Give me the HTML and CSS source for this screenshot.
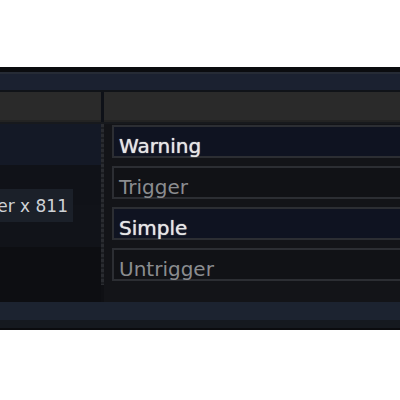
FILE: index.html
```html
<!DOCTYPE html>
<html lang="en">
<head>
  <meta charset="UTF-8">
  <title>Trigger Panel</title>
  <link rel="stylesheet" href="styles.css">
</head>
<body>

<div class="panel">
  <div class="topbar"></div>

  <div class="header">
    <div class="head-cell"></div>
    <div class="head-split"></div>
    <div class="head-cell"></div>
  </div>

  <div class="content">
    <div class="left-col">
      <div class="counter">Counter x 811</div>
    </div>
    <div class="split"></div>
    <div class="right-col">
      <div class="opt active">Warning</div>
      <div class="opt">Trigger</div>
      <div class="opt active">Simple</div>
      <div class="opt">Untrigger</div>
    </div>
  </div>

  <div class="footer"></div>
</div>

</body>
</html>
```

FILE: styles.css
```css
body {
  margin: 0;
  background: #ffffff;
  font-family: "DejaVu Sans", sans-serif;
}
.panel {
  margin-top: 67px;
  width: 400px;
  overflow: hidden;
}
.topbar {
  height: 18px;
  background: #1b2130;
  border-top: 5px solid #0b0c0f;
  border-bottom: 2px solid #101318;
  box-shadow: inset 0 2px 0 #262b35;
}
.header {
  display: grid;
  grid-template-columns: 101px 3px 1fr;
  height: 30px;
  border-bottom: 2px solid #17191d;
}
.head-cell {
  background: #2a2a2a;
  box-shadow: inset 0 -2px 0 #232323;
}
.head-split {
  background: #0e1118;
}
.content {
  display: grid;
  grid-template-columns: 101px 3px 1fr;
  height: 178px;
  background: #0e0f13;
}
.left-col {
  overflow: hidden;
  background: linear-gradient(#141926 0 41px, #101218 41px 81px, #111319 81px 123px, #0d0e12 123px);
}
.counter {
  width: 73px;
  height: 33px;
  margin-top: 65px;
  box-sizing: border-box;
  padding: 2px 5px 0 0;
  line-height: 31px;
  display: flex;
  justify-content: flex-end;
  overflow: hidden;
  white-space: nowrap;
  background: #1b2029;
  color: #cfd2d6;
  font-size: 17px;
}
.split {
  background: repeating-linear-gradient(#2a2c31 0 3px, #1c1e22 3px 5px) 0 0 / 3px 161px no-repeat, #0f1014;
}
.right-col {
  display: flex;
  flex-direction: column;
  gap: 8px;
  padding: 1px 0 0 8px;
  background: #131418;
}
.opt {
  height: 33px;
  box-sizing: border-box;
  border: 2px solid #2c2e33;
  border-right: none;
  padding: 9px 0 0 5px;
  line-height: 20px;
  font-size: 20px;
  background: #111216;
  color: #8b8d90;
}
.opt.active {
  background: #0f1321;
  color: #e6e6e6;
  text-shadow: 0 0 1px #e6e6e6;
}
.footer {
  height: 18px;
  background: #1c2330;
  border-bottom: 8px solid #15191f;
  box-shadow: 0 2px 0 #0b0c0f;
  margin-bottom: 2px;
}
```
